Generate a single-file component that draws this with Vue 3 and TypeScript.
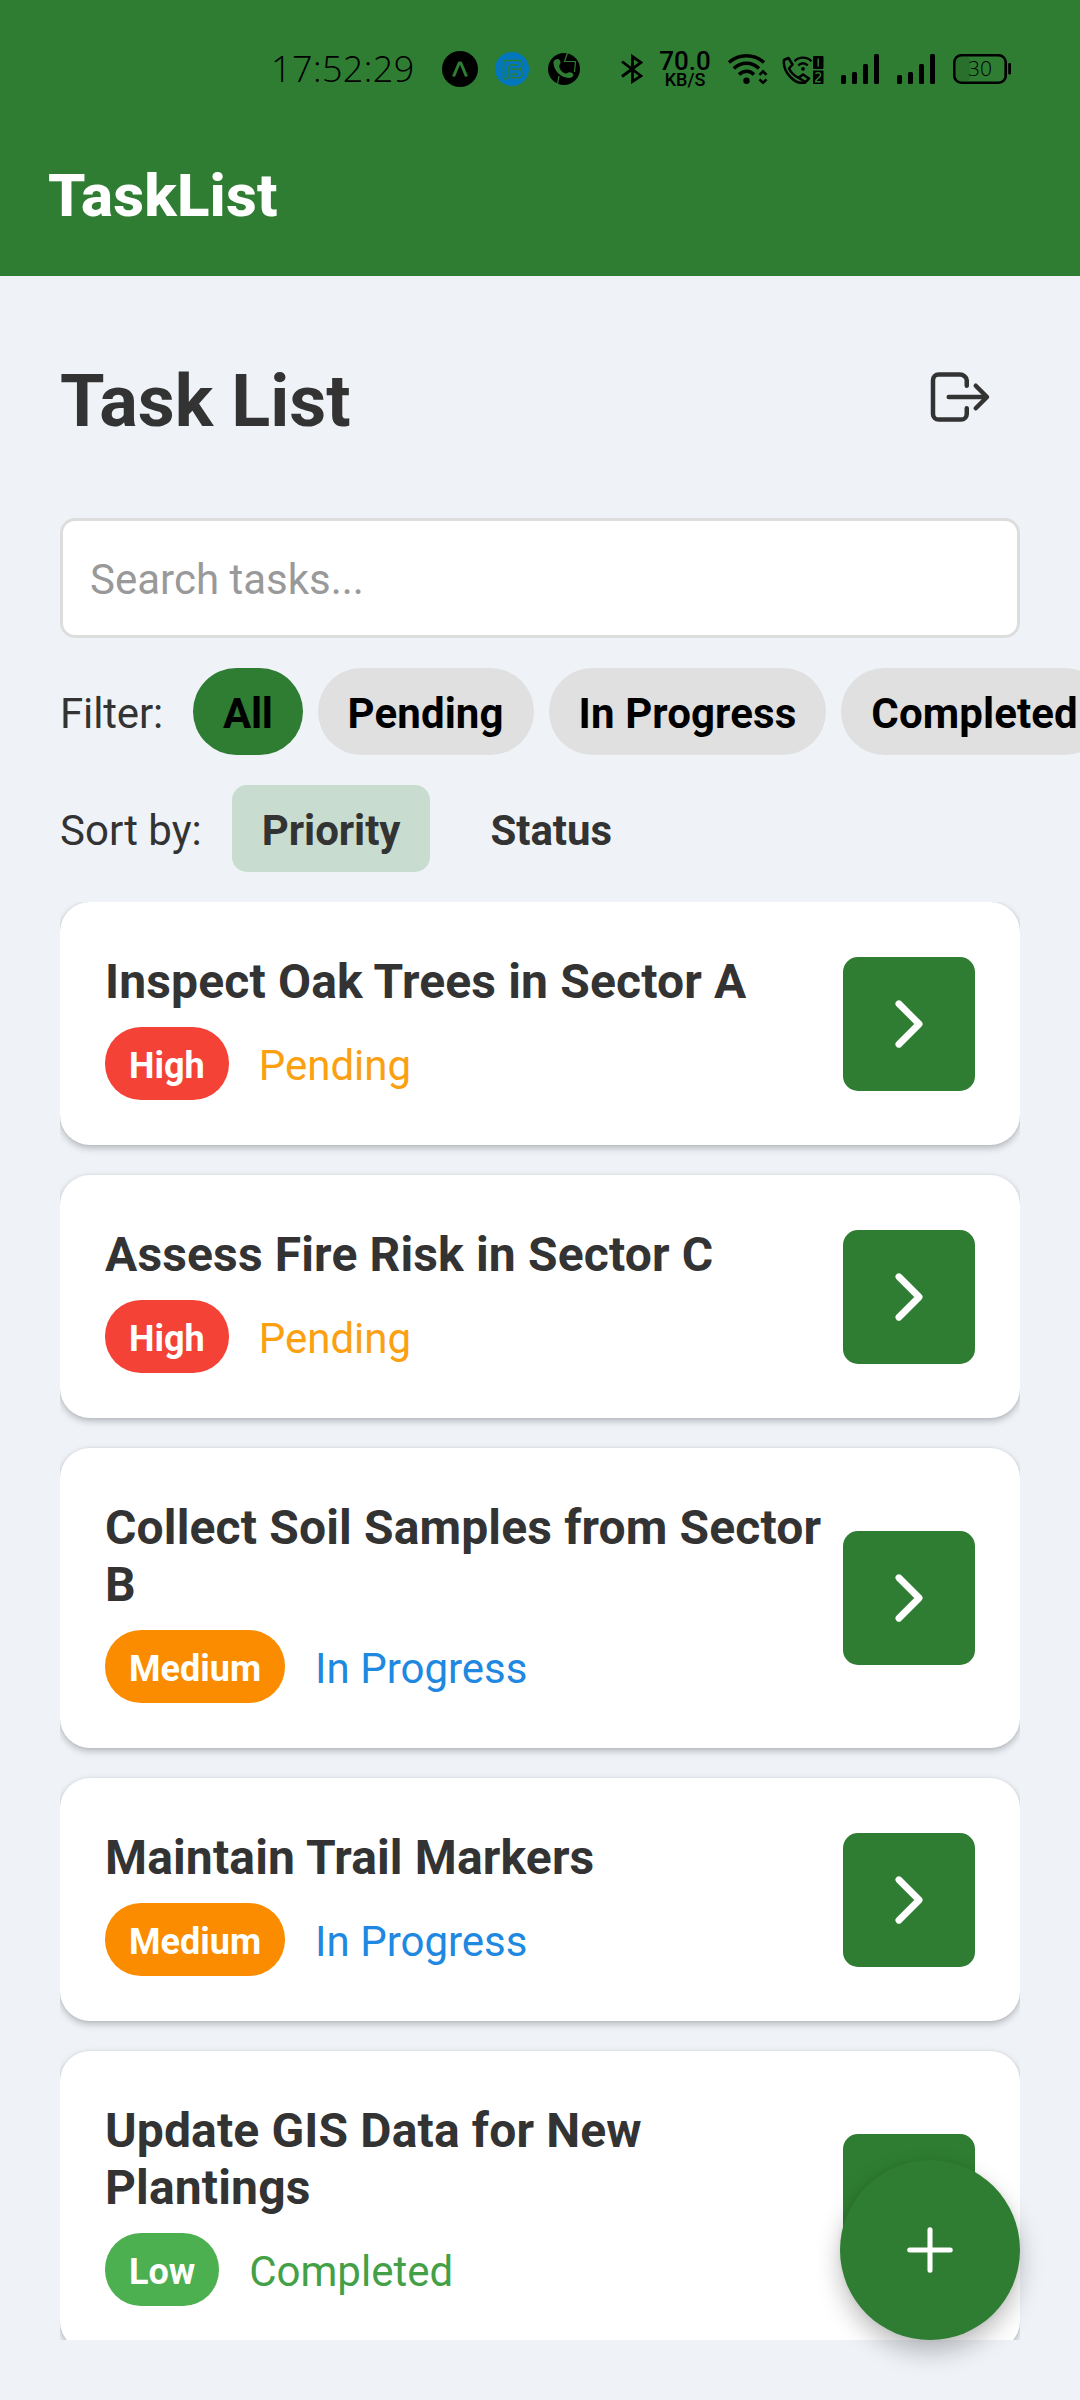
<script setup lang="ts">
import { ref } from 'vue'

type Priority = 'High' | 'Medium' | 'Low'
type Status = 'Pending' | 'In Progress' | 'Completed'

interface Task {
  id: number
  title: string
  priority: Priority
  status: Status
}

const filters = ['All', 'Pending', 'In Progress', 'Completed']
const sorts = ['Priority', 'Status']
const activeFilter = ref('All')
const activeSort = ref('Priority')
const query = ref('')

const tasks: Task[] = [
  { id: 1, title: 'Inspect Oak Trees in Sector A', priority: 'High', status: 'Pending' },
  { id: 2, title: 'Assess Fire Risk in Sector C', priority: 'High', status: 'Pending' },
  { id: 3, title: 'Collect Soil Samples from Sector B', priority: 'Medium', status: 'In Progress' },
  { id: 4, title: 'Maintain Trail Markers', priority: 'Medium', status: 'In Progress' },
  { id: 5, title: 'Update GIS Data for New Plantings', priority: 'Low', status: 'Completed' },
]

const slug = (s: string) => s.toLowerCase().replace(' ', '-')
</script>

<template>
  <div class="screen">
    <header class="top">
      <div class="statusbar">
        <span class="clock">17:52:29</span>
        <svg class="i-expo" width="36" height="36" viewBox="0 0 36 36">
          <circle cx="18" cy="18" r="18" fill="#000" />
          <path d="M11.500 25.500L17.200 12h1.600l5.700 13.500" fill="none" stroke="#2e7d32" stroke-width="3" stroke-linejoin="round" />
        </svg>
        <svg class="i-b" width="34" height="36" viewBox="0 0 34 36">
          <circle cx="17" cy="18" r="17" fill="#0277bd" />
          <path d="M13 15V27.500H8.500V12q0-2.500 2.500-2.500H23.500q3.500 0 3.500 4 0 3-2.500 4.700 2.500 1.600 2.500 4.600 0 4-4 4H16.500V23H22.500M15.500 18.200H24.500M15 14H22.500" fill="none" stroke="#2e7d32" stroke-width="1.500" stroke-linejoin="round" />
        </svg>
        <svg class="i-phone" width="32" height="36" viewBox="0 0 32 36">
          <circle cx="16" cy="18" r="16" fill="#000" />
          <path d="M7.500 8.500c2.500-1.500 5 0 5 3 0 2-1.800 2.500-1.200 4.500.8 3 3 5.500 6 6.500 2 .5 2.500-1.500 4.500-1.200 3 .5 4.300 2 3.300 3.700-1.200 2-4 2.300-7.300 1.500C11 25 6 18.500 5.500 12.500 5.400 10.500 6 9.300 7.500 8.500z" fill="#2e7d32" />
          <path d="M19.500 2L16.500 10.500H27.500L26.500 21M11 25L9.500 33" fill="none" stroke="#2e7d32" stroke-width="1.200" />
        </svg>
        <svg class="i-bt" width="22" height="30" viewBox="0 0 22 30">
          <path d="M1 7.500L20 22 11.500 27.500V2.500L20 8.500 1 22.500" fill="none" stroke="#000" stroke-width="2.800" />
        </svg>
        <span class="speed"><b>70.0</b><i>KB/S</i></span>
        <svg class="i-wifi" width="40" height="30" viewBox="0 0 40 30">
          <g fill="none" stroke="#000" stroke-width="3.500">
            <path d="M1 8.500C11-.5 26-.5 36 8.500" />
            <path d="M5.800 14.500C13 7.500 24 7.500 31 14.500" />
            <path d="M11 20.500C15.500 16 22 16 26 20.500" />
          </g>
          <circle cx="18.500" cy="26.800" r="3.200" />
          <path d="M31.500 20.800L35 17.300l3.500 3.500M31.500 25.300L35 28.800l3.500-3.500" fill="none" stroke="#000" stroke-width="2.600" />
        </svg>
        <svg class="i-call" width="42" height="30" viewBox="0 0 42 30">
          <path d="M2 6L6.500 4l4 6.500-3.500 4c2 4 5.500 7.500 9.500 9.300L21 20.500l6 4-4 4.200C12 31 .5 17 2 6zM16.500 23.800l7 4.500" fill="none" stroke="#000" stroke-width="2.500" stroke-linejoin="round" />
          <g fill="none" stroke="#000" stroke-width="2.300">
            <path d="M12.500 7.200C17 2.300 25 2.300 29.500 7.200" />
            <path d="M16.300 11.500C19 8.500 23 8.500 25.700 11.500" />
          </g>
          <circle cx="21" cy="14.800" r="1.900" />
          <rect x="31" y="2" width="10.500" height="13" rx="1" />
          <rect x="31" y="16.500" width="10.500" height="13.500" rx="1" />
          <path d="M36.200 4.500v8M33.800 20q0-1.300 2.400-1.300t2.400 2q0 1.700-2.400 3.400t-2.400 3.600h5" fill="none" stroke="#2e7d32" stroke-width="1.500" />
        </svg>
        <svg v-for="n in 2" :key="n" class="i-sig" width="38" height="30" viewBox="0 0 38 30">
          <rect x="0" y="21" width="5" height="9" rx="1.500" />
          <rect x="11" y="18" width="5" height="12" rx="1.500" />
          <rect x="22" y="10" width="5" height="20" rx="1.500" />
          <rect x="33" y="0" width="5" height="30" rx="1.500" />
        </svg>
        <svg class="i-bat" width="58" height="30" viewBox="0 0 58 30">
          <rect x="3" y="3" width="14" height="24" rx="4" fill="#29702d" />
          <rect x="1.300" y="1.300" width="51.400" height="27.400" rx="7" fill="none" stroke="#000" stroke-width="2.600" />
          <rect x="55.200" y="9" width="2.800" height="11.500" rx="1.300" />
          <text x="27" y="22" text-anchor="middle" class="bat-text">30</text>
        </svg>
      </div>
      <div class="appbar">TaskList</div>
    </header>

    <main class="content">
      <div class="title-row">
        <h1>Task List</h1>
        <button class="logout" aria-label="Log out">
          <svg width="72" height="72" viewBox="0 0 512 512" fill="none" stroke="#333" stroke-width="32" stroke-linecap="round" stroke-linejoin="round">
            <path d="M304 336v40a40 40 0 01-40 40H104a40 40 0 01-40-40V136a40 40 0 0140-40h152c22.090 0 48 17.910 48 40v40M368 336l80-80-80-80M176 256h256" />
          </svg>
        </button>
      </div>

      <input v-model="query" class="search" type="text" placeholder="Search tasks..." />

      <div class="row">
        <span class="label filter-label">Filter:</span>
        <button v-for="f in filters" :key="f" class="chip" :class="{ active: f === activeFilter }" @click="activeFilter = f">{{ f }}</button>
      </div>

      <div class="row">
        <span class="label">Sort by:</span>
        <button v-for="s in sorts" :key="s" class="sort" :class="{ active: s === activeSort }" @click="activeSort = s">{{ s }}</button>
      </div>

      <section class="list">
        <article v-for="t in tasks" :key="t.id" class="card">
          <div class="info">
            <h2>{{ t.title }}</h2>
            <div class="meta">
              <span class="tag" :class="slug(t.priority)">{{ t.priority }}</span>
              <span class="state" :class="slug(t.status)">{{ t.status }}</span>
            </div>
          </div>
          <button class="go" :aria-label="t.title">
            <svg width="72" height="72" viewBox="0 0 512 512" fill="none" stroke="#fff" stroke-width="48" stroke-linecap="round" stroke-linejoin="round">
              <path d="M184 112l144 144-144 144" />
            </svg>
          </button>
        </article>
      </section>
    </main>

    <button class="fab" aria-label="Add task">
      <svg width="72" height="72" viewBox="0 0 512 512" fill="none" stroke="#fff" stroke-width="36" stroke-linecap="round">
        <path d="M256 112v288M400 256H112" />
      </svg>
    </button>
  </div>
</template>

<style>
body {
  margin: 0;
}
</style>

<style scoped>
* {
  box-sizing: border-box;
}
.screen {
  position: relative;
  display: flex;
  flex-direction: column;
  width: 1080px;
  height: 2400px;
  overflow: hidden;
  background: #eff3f8;
  color: #333;
  font-family: Roboto, sans-serif;
  font-size: 42px;
}
svg {
  display: block;
  flex: none;
}
button {
  border: 0;
  padding: 0;
  background: none;
  color: inherit;
  font: inherit;
  flex: none;
}
.top {
  height: 276px;
  flex: none;
  background: #2e7d32;
}
.statusbar {
  display: flex;
  align-items: center;
  height: 138px;
  padding-left: 271px;
  color: #000;
}
.clock {
  width: 171px;
  font: 350 36px/40px 'Open Sans', sans-serif;
  letter-spacing: 0.4px;
  white-space: nowrap;
}
.i-b {
  margin-left: 17px;
}
.i-phone {
  margin-left: 19px;
}
.i-bt {
  margin-left: 41px;
}
.speed {
  display: flex;
  flex-direction: column;
  align-items: center;
  width: 52px;
  margin-left: 16px;
}
.speed b {
  font: 500 26px/22px Roboto, sans-serif;
}
.speed i {
  font: 500 18px/16px Roboto, sans-serif;
}
.i-wifi {
  margin-left: 17px;
}
.i-call {
  margin-left: 14px;
}
.i-sig {
  margin-left: 17px;
}
.i-sig + .i-sig {
  margin-left: 18px;
}
.i-bat {
  margin-left: 18px;
}
.bat-text {
  font: 300 21px 'Open Sans', sans-serif;
}
.appbar {
  padding: 23px 48px 0;
  color: #fff;
  font-size: 60px;
  font-weight: 850;
  letter-spacing: 0.2px;
  line-height: 70px;
}
.content {
  display: flex;
  flex-direction: column;
  flex: 1;
  min-height: 0;
  padding: 60px;
}
.title-row {
  display: flex;
  align-items: center;
  justify-content: space-between;
  height: 122px;
  margin-bottom: 60px;
  flex: none;
}
h1 {
  margin: 0;
  padding-top: 9px;
  font-size: 72px;
  line-height: 96px;
  font-weight: 700;
}
.logout {
  padding: 24px;
}
.search {
  flex: none;
  width: 960px;
  height: 120px;
  padding: 2px 27px 0;
  border: 3px solid #ddd;
  border-radius: 15px;
  background: #fff;
  font: 400 42px Roboto, sans-serif;
  outline: none;
}
.search::placeholder {
  color: #999;
  opacity: 1;
}
.row {
  display: flex;
  height: 87px;
  margin-top: 30px;
  flex: none;
}
.label,
.chip,
.sort {
  padding: 17px 0 13px;
  line-height: 57px;
  white-space: nowrap;
}
.label {
  margin-right: 30px;
}
.filter-label {
  letter-spacing: -0.15px;
}
.chip {
  margin-right: 15px;
  padding-left: 30px;
  padding-right: 30px;
  border-radius: 45px;
  background: #e0e0e0;
  color: #000;
  font-weight: 700;
  letter-spacing: 0.1px;
}
.chip.active {
  background: #2e7d32;
  letter-spacing: -0.3px;
}
.sort {
  margin-right: 30px;
  padding-left: 30px;
  padding-right: 30px;
  border-radius: 15px;
  font-weight: 700;
  letter-spacing: -0.05px;
}
.sort.active {
  background: #c8ddd0;
}
.list {
  flex: 1;
  min-height: 0;
  margin-top: 30px;
  overflow: hidden;
}
.card {
  display: flex;
  align-items: center;
  padding: 45px;
  margin-bottom: 30px;
  border-radius: 30px;
  background: #fff;
  box-shadow: 0 3px 7px rgba(0, 0, 0, 0.25), 0 0 3px rgba(0, 0, 0, 0.06);
}
.info {
  flex: 1;
  min-width: 0;
}
h2 {
  margin: 0 0 15px;
  padding: 6px 0 2px;
  font-size: 48px;
  line-height: 57px;
  font-weight: 700;
  letter-spacing: 0.15px;
}
.meta {
  display: flex;
  height: 73px;
}
.tag {
  padding: 15px 24px 10px;
  border-radius: 36px;
  color: #fff;
  font-size: 36px;
  line-height: 48px;
  font-weight: 700;
}
.high {
  background: #f44336;
}
.medium {
  background: #fb8c00;
}
.low {
  background: #4caf50;
}
.state {
  margin-left: 30px;
  padding-top: 10px;
  line-height: 57px;
}
.pending {
  color: #fba010;
}
.in-progress {
  color: #2088e0;
}
.completed {
  color: #43a047;
}
.go {
  display: flex;
  align-items: center;
  justify-content: center;
  width: 132px;
  height: 134px;
  border-radius: 15px;
  background: #2e7d32;
}
.fab {
  position: absolute;
  right: 60px;
  bottom: 60px;
  display: flex;
  align-items: center;
  justify-content: center;
  width: 180px;
  height: 180px;
  border-radius: 50%;
  background: #2e7d32;
  box-shadow: 0 12px 24px rgba(0, 0, 0, 0.25), 0 0 6px rgba(0, 0, 0, 0.06);
}
</style>
